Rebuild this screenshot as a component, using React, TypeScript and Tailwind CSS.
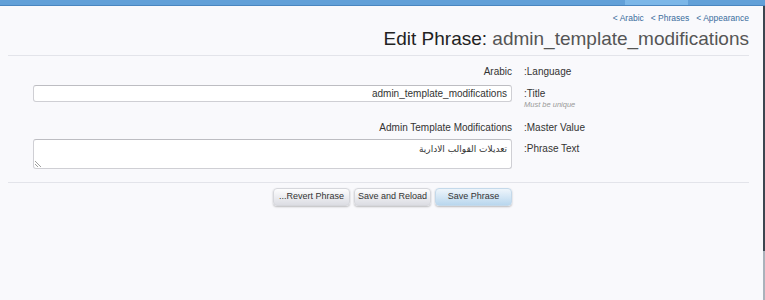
import React from 'react';

const font = { fontFamily: '"Liberation Sans", "DejaVu Sans", Arial, sans-serif' };

function Row({ label, hint, labelOffset = 0, children }: { label: string; hint?: string; labelOffset?: number; children: React.ReactNode }) {
  return (
    <div className="flex items-start">
      <div className="w-[479px] ml-[25px] flex justify-end">{children}</div>
      <div className="ml-[12px] flex-1 flex flex-col" style={{ marginTop: labelOffset }}>
        <span className="text-[10px] leading-[14px] text-[#333]">{label}</span>
        {hint && <span className="text-[7.5px] leading-[9px] italic text-[#999] -mt-[1px]">{hint}</span>}
      </div>
    </div>
  );
}

export default function App() {
  return (
    <div className="w-[765px] h-[300px] bg-[#f9f9fc] overflow-hidden flex flex-col" style={font}>
      {/* top bar */}
      <div className="h-[6px] flex border-b border-[#4a86c0] shrink-0">
        <div className="flex-1 bg-[#62a0d8]" />
        <div className="w-[63px] bg-[#7cb7e8]" />
        <div className="w-[77px] bg-[#62a0d8]" />
      </div>

      <div className="flex flex-1">
        <div className="flex-1 pl-[8px] pr-[14px]">
          {/* breadcrumbs */}
          <div className="flex justify-end gap-[7px] pt-[6px] text-[8.5px] leading-[12px] text-[#3a6d9c]">
            <a href="#">&lt; Arabic</a>
            <a href="#">&lt; Phrases</a>
            <a href="#">&lt; Appearance</a>
          </div>
          <h1 className="mt-[3px] text-right text-[19px] leading-[24px] text-[#222] font-normal">
            Edit Phrase: <span className="text-[#555]">admin_template_modifications</span>
          </h1>
          <div className="mt-[4px] border-b border-[#e3e4ea]" />

          <div className="mt-[9px]">
            <Row label=":Language">
              <span className="text-[10px] leading-[14px] text-[#333]">Arabic</span>
            </Row>
          </div>

          <div className="mt-[6px]">
            <Row label=":Title" hint="Must be unique" labelOffset={2}>
              <div className="w-full h-[17px] bg-white border border-[#cfcfd4] border-t-[#bdbdc2] rounded-[3px] flex items-center justify-end pr-[4px] text-[10px] text-[#333]">
                admin_template_modifications
              </div>
            </Row>
          </div>

          <div className="mt-[12px]">
            <Row label=":Master Value">
              <span className="text-[10px] leading-[14px] text-[#333]">Admin Template Modifications</span>
            </Row>
          </div>

          <div className="mt-[4px]">
            <Row label=":Phrase Text" labelOffset={3}>
              <div className="relative w-full h-[30px] bg-white border border-[#cfcfd4] border-t-[#bdbdc2] rounded-[3px] flex justify-end pr-[4px] pt-[3px]">
                <span dir="rtl" className="text-[9px] leading-[12px] text-[#333]" style={{ fontFamily: '"DejaVu Sans", sans-serif' }}>
                  تعديلات القوالب الادارية
                </span>
                <svg className="absolute left-[1px] bottom-[1px]" width="7" height="7" viewBox="0 0 7 7">
                  <path d="M0 1 L6 7 M0 4 L3 7" stroke="#888" strokeWidth="0.8" />
                </svg>
              </div>
            </Row>
          </div>

          <div className="mt-[13px] border-b border-[#e3e4ea]" />

          <div className="mt-[5px] flex">
            <div className="w-[479px] ml-[25px] flex justify-end gap-[4px]">
              <button className="w-[77px] h-[18px] rounded-[4px] text-[9px] text-[#333] bg-gradient-to-b from-[#fdfdfe] to-[#dcdde3] border border-[#d6d7dc] shadow-[0_1px_2px_rgba(0,0,0,0.25)]">
                ...Revert Phrase
              </button>
              <button className="w-[77px] h-[18px] rounded-[4px] text-[9px] text-[#333] bg-gradient-to-b from-[#fdfdfe] to-[#dcdde3] border border-[#d6d7dc] shadow-[0_1px_2px_rgba(0,0,0,0.25)]">
                Save and Reload
              </button>
              <button className="w-[77px] h-[18px] rounded-[4px] text-[9px] text-[#333] bg-gradient-to-b from-[#eef5fb] to-[#b9d7ee] border border-[#c4d9ea] shadow-[0_1px_2px_rgba(0,0,0,0.25)]">
                Save Phrase
              </button>
            </div>
          </div>
        </div>
        {/* right frame edge */}
        <div className="w-[2px] flex flex-col">
          <div className="h-[245px] bg-[#3d4650]" />
          <div className="flex-1 bg-[#aab2bb]" />
        </div>
      </div>
    </div>
  );
}
